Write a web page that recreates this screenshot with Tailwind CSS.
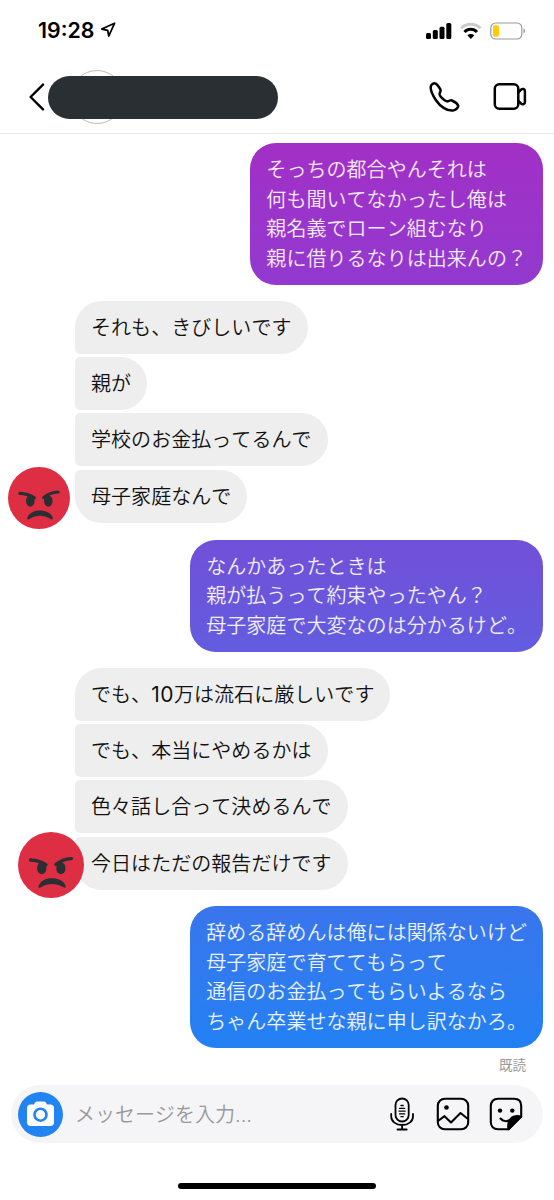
<!DOCTYPE html>
<html lang="ja">
<head>
<meta charset="utf-8">
<meta name="viewport" content="width=device-width, initial-scale=1">
<title>メッセージ</title>
<script src="https://cdn.jsdelivr.net/npm/@tailwindcss/browser@4"></script>
</head>
<body class="bg-white">
<svg class="hidden">
  <symbol id="angry" viewBox="0 0 62 62">
    <circle cx="31" cy="31" r="31" fill="#dd2e44"/>
    <path d="M11.800 26.300q8 .2 14.500 4.600M50.200 25q-8.500.5-14.500 5.400" fill="none" stroke="#292f33" stroke-width="3.200" stroke-linecap="round"/>
    <ellipse cx="22.300" cy="34" rx="4.300" ry="5.800" fill="#292f33"/>
    <ellipse cx="40.300" cy="34" rx="4.300" ry="5.800" fill="#292f33"/>
    <path d="M19.300 51C21 46 26 43.500 31.700 43.500S42.800 45.500 44.700 50.500c.6 1.800-.6 2.400-2 1.500C38.500 49.500 35.500 48.800 32 48.800s-7 .8-10.500 3.200c-1.600 1-2.700.3-2.200-1z" fill="#292f33"/>
  </symbol>
</svg>
<div class="flex h-[1200px] w-[554px] flex-col overflow-hidden bg-white font-['Noto_Sans_CJK_JP',sans-serif]">
  <div class="flex h-[61px] shrink-0 items-center justify-between pl-[38px] pr-[28px]">
    <div class="flex items-center gap-[6px]">
      <span class="font-['Inter',sans-serif] text-[21.300px] font-semibold leading-none text-black">19:28</span>
      <svg class="h-[16px] w-[16px]" viewBox="0 0 16 16" fill="none" stroke="#000" stroke-width="1.800" stroke-linejoin="round"><path d="M14.600 1.200 1.700 7l6 1.300L8.800 14z"/></svg>
    </div>
    <div class="flex items-center">
      <svg class="h-[18px] w-[26px]" viewBox="0 0 26 18"><rect x="0" y="11" width="5" height="6" rx="1.500"/><rect x="6.800" y="8" width="5" height="9" rx="1.500"/><rect x="13.500" y="4.700" width="5" height="12.300" rx="1.500"/><rect x="20.300" y="1" width="5" height="16" rx="1.500"/></svg>
      <svg class="ml-[7px] h-[18px] w-[23px]" viewBox="0 0 23 18" fill="none"><path d="M2 6.200C7 .8 16.500.8 21.500 6.200" stroke="#ccc" stroke-width="3"/><path d="M5.500 10c3.500-3.800 9-3.800 12.500 0" stroke="#000" stroke-width="3"/><path d="M8.300 13.200q3.500-2.600 7 0L11.800 17z" fill="#000"/></svg>
      <svg class="ml-[8px] h-[18px] w-[36px]" viewBox="0 0 36 18"><rect x=".8" y="1" width="31" height="16" rx="4.800" fill="#fff" stroke="#999" stroke-width="1.200"/><rect x="3" y="3.200" width="6" height="11.500" rx="2" fill="#fc0"/><path d="M33.500 6.500c2.200.8 2.200 4.200 0 5z" fill="#999"/></svg>
    </div>
  </div>
  <header class="flex h-[73px] shrink-0 items-center border-b border-[#e9e9e9] pl-[29px] pr-[27px]">
    <svg class="h-[28px] w-[16px]" viewBox="0 0 16 28" fill="none" stroke="#000" stroke-width="2.400" stroke-linecap="round" stroke-linejoin="round"><path d="M14 1.600 1.600 14 14 26.400"/></svg>
    <div class="relative ml-[3px] h-[54px] w-[230px]">
      <div class="absolute left-[22px] top-0 h-[54px] w-[54px] rounded-full border border-[#bbb]"></div>
      <div class="absolute inset-x-0 top-[6px] h-[43px] rounded-full bg-[#292f33]"></div>
    </div>
    <svg class="ml-auto h-[30px] w-[31px]" viewBox="0 0 31 30" fill="none" stroke="#000" stroke-width="2.500" stroke-linejoin="round"><path d="M2 3.800C2.500 2.300 4.700 1 6.200 1.400c1.500.3 4.200 4.200 5.200 6 .8 1.600-1 3.300-.8 5 .3 2 4.700 6.600 7 6.900 1.800.2 3.600-1.500 5.300-.8 1.800.8 5.500 3.400 6.200 5 .6 1.500-2 4.400-4.400 4.900C18.500 29.600 11 24.500 6.800 18 3.500 13 1 7 2 3.800z"/></svg>
    <svg class="ml-[33px] h-[28px] w-[34px]" viewBox="0 0 34 28" fill="none" stroke="#000" stroke-width="2.500" stroke-linejoin="round"><rect x="1.800" y="1.300" width="23.500" height="24.500" rx="4.500"/><path d="M25.500 9.500 28 6.600c1.600-1.300 3.900-.7 3.900 1.400v11.200c0 2.100-2.300 2.700-3.900 1.400l-2.500-2.900"/></svg>
  </header>
  <main class="flex shrink-0 flex-col pl-[75px] pr-[11px] pt-[9px] text-[20px] leading-[29.500px] tracking-[0.050px] text-[#111] [font-kerning:none]">
    <div class="self-end whitespace-nowrap rounded-[26px] bg-linear-to-b from-[#a22fc6] to-[#9239cf] px-4 pb-[13px] pt-[11px] font-[350] text-white/90">そっちの都合やんそれは<br>何も聞いてなかったし俺は<br>親名義でローン組むなり<br>親に借りるなりは出来んの？</div>
    <div class="relative mt-[16px] flex flex-col items-start gap-[3.200px] font-[350]">
      <div class="h-[53px] rounded-[26.500px] rounded-bl-[5px] bg-[#eee] px-4 pt-[11px]">それも、きびしいです</div>
      <div class="h-[53px] rounded-r-[26.500px] rounded-l-[5px] bg-[#eee] px-4 pt-[11px]">親が</div>
      <div class="h-[53px] rounded-r-[26.500px] rounded-l-[5px] bg-[#eee] px-4 pt-[11px]">学校のお金払ってるんで</div>
      <div class="h-[53px] rounded-[26.500px] rounded-tl-[5px] bg-[#eee] px-4 pt-[11px]">母子家庭なんで</div>
      <svg class="absolute -left-[67px] top-[165.500px] h-[62px] w-[62px]"><use href="#angry"/></svg>
    </div>
    <div class="mt-[17px] self-end whitespace-nowrap rounded-[26px] bg-linear-to-b from-[#7150d8] to-[#625cdf] px-4 pb-[13px] pt-[11px] font-[350] text-white/90">なんかあったときは<br>親が払うって約束やったやん？<br>母子家庭で大変なのは分かるけど。</div>
    <div class="relative mt-[16px] flex flex-col items-start gap-[3.200px] font-[350]">
      <div class="h-[53px] rounded-[26.500px] rounded-bl-[5px] bg-[#eee] px-4 pt-[11px]">でも、<span class="font-['Inter'] text-[21px] font-normal leading-none tracking-[0.500px]">10</span>万は流石に厳しいです</div>
      <div class="h-[53px] rounded-r-[26.500px] rounded-l-[5px] bg-[#eee] px-4 pt-[11px]">でも、本当にやめるかは</div>
      <div class="h-[53px] rounded-r-[26.500px] rounded-l-[5px] bg-[#eee] px-4 pt-[11px]">色々話し合って決めるんで</div>
      <div class="h-[53px] rounded-[26.500px] rounded-tl-[5px] bg-[#eee] px-4 pt-[11px]">今日はただの報告だけです</div>
      <svg class="absolute -left-[57px] top-[164px] h-[66px] w-[66px]" viewBox="0 0 62 62"><use href="#angry"/></svg>
    </div>
    <div class="mt-[16.500px] self-end whitespace-nowrap rounded-[26px] bg-linear-to-b from-[#3975ec] to-[#2181f3] px-4 pb-[13px] pt-[11px] font-[350] text-white/90">辞める辞めんは俺には関係ないけど<br>母子家庭で育ててもらって<br>通信のお金払ってもらいよるなら<br>ちゃん卒業せな親に申し訳なかろ。</div>
    <div class="mr-[17px] mt-[6px] self-end text-[13.500px] leading-[20px] tracking-normal text-[#999]">既読</div>
  </main>
  <div class="mx-[11px] mt-auto flex h-[58px] shrink-0 items-center rounded-full bg-[#f5f5f7] pl-[7px] pr-[20px]">
    <svg class="h-[45px] w-[45px]" viewBox="0 0 45 45"><circle cx="22.500" cy="22.500" r="22.500" fill="#2283f2"/><path d="M12.500 12.500h3.500c.8-2 1.700-3 3-3h7c1.300 0 2.200 1 3 3h3.500c2 0 3.500 1.500 3.500 3.500v14.500c0 2-1.500 3.500-3.500 3.500h-20C10.500 34 9 32.500 9 30.500V16c0-2 1.500-3.500 3.500-3.500z" fill="#fff"/><circle cx="22.500" cy="22.700" r="6" fill="#fff" stroke="#2283f2" stroke-width="2.600"/></svg>
    <span class="ml-[12px] text-[20px] font-[350] leading-[30px] text-[#999] [font-kerning:none]">メッセージを入力<span class="font-['Inter']">...</span></span>
    <svg class="ml-auto h-[34px] w-[24px]" viewBox="0 0 24 34" fill="none" stroke="#000" stroke-width="1.800" stroke-linecap="round"><rect x="5.500" y="1.500" width="13.200" height="23" rx="6.600"/><path d="M1.200 17v2.500c0 5 4.800 8.500 10.900 8.500S23 24.500 23 19.500V17M12.100 28v4.200M7.500 32.500h9.200"/><path d="M11 8.500h2.200M9.500 11.300h5.200M9 14.100h6.200M9.500 16.900h5.200M11 19.700h2.200" stroke-width="1.300"/></svg>
    <svg class="ml-[22px] h-[34px] w-[34px]" viewBox="0 0 34 34" fill="none" stroke="#000" stroke-width="2.100" stroke-linejoin="round"><rect x="1.800" y="1.800" width="30.400" height="30.400" rx="7"/><circle cx="10.500" cy="10.500" r="2.300" fill="#000" stroke="none"/><path d="m2 24 6.500-4.800 6.500 6.300 9.500-9.500 7.500 6"/></svg>
    <svg class="ml-[19px] h-[34px] w-[34px]" viewBox="0 0 34 34" fill="none" stroke="#000" stroke-width="2.100" stroke-linejoin="round" stroke-linecap="round"><path d="M19.500 32.200H9c-4.500 0-7.200-2.700-7.200-7.200V9C1.800 4.500 4.500 1.800 9 1.800h16c4.500 0 7.200 2.700 7.200 7.200v10.500z"/><path d="M19.500 32.200c-1.500-8 3-15 12.700-12.700z" fill="#000"/><circle cx="11" cy="13.600" r="2.200" fill="#000" stroke="none"/><circle cx="23.300" cy="13.600" r="2.200" fill="#000" stroke="none"/><path d="M11.500 21.500c2.500 3 6.500 3.200 9.500 1.500"/></svg>
  </div>
  <div class="flex h-[57px] shrink-0 justify-center pt-[39.500px]"><div class="h-[6.500px] w-[198px] rounded-full bg-black"></div></div>
</div>
</body>
</html>
